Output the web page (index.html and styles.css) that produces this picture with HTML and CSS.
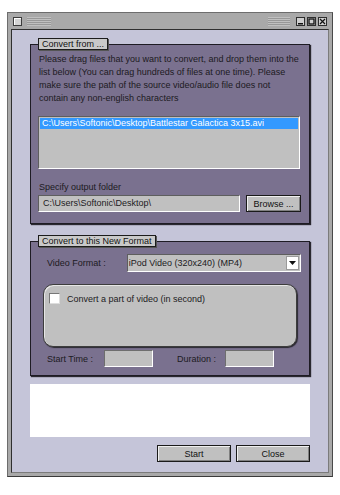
FILE: index.html
```html
<!DOCTYPE html>
<html lang="en">
<head>
    <meta charset="UTF-8">
    <title>Video Converter</title>
    <link rel="stylesheet" href="styles.css">
</head>
<body>
    <div class="window">
        <!-- Title bar -->
        <div class="titlebar">
            <span class="sysbox"></span>
            <span class="grip grip-left"></span>
            <span class="spacer"></span>
            <span class="grip grip-right"></span>
            <span class="tbtn">
                <svg width="7" height="7" viewBox="0 0 7 7"><rect x="1" y="5" width="5" height="1.5" fill="#111"/></svg>
            </span>
            <span class="tbtn">
                <svg width="7" height="7" viewBox="0 0 7 7"><rect x="1" y="1" width="5" height="5" fill="none" stroke="#111" stroke-width="1.3"/></svg>
            </span>
            <span class="tbtn">
                <svg width="7" height="7" viewBox="0 0 7 7"><path d="M1 1 L6 6 M6 1 L1 6" stroke="#111" stroke-width="1.2"/></svg>
            </span>
        </div>

        <div class="client">
            <!-- Source files -->
            <fieldset class="panel panel-from">
                <legend>Convert from ...</legend>
                <p class="intro">Please drag files that you want to convert, and drop them into the<br>list below (You can drag hundreds of files at one time). Please<br>make sure the path of the source video/audio file does not<br>contain any non-english characters</p>
                <div class="filelist">
                    <div class="file selected">C:\Users\Softonic\Desktop\Battlestar Galactica 3x15.avi</div>
                </div>
                <div class="label">Specify output folder</div>
                <div class="folder-row">
                    <div class="textbox">C:\Users\Softonic\Desktop\</div>
                    <button class="btn btn-browse">Browse ...</button>
                </div>
            </fieldset>

            <!-- Target format -->
            <fieldset class="panel panel-to">
                <legend>Convert to this New Format</legend>
                <div class="format-row">
                    <span class="format-label">Video Format :</span>
                    <div class="select">
                        <span class="select-text">iPod Video (320x240) (MP4)</span>
                        <span class="select-arrow">
                            <svg width="7" height="4" viewBox="0 0 7 4"><path d="M0 0 H7 L3.5 4 Z" fill="#111"/></svg>
                        </span>
                    </div>
                </div>
                <div class="partbox">
                    <label class="check-row"><span class="checkbox"></span>Convert a part of video (in second)</label>
                </div>
                <div class="time-row">
                    <span class="time-label">Start Time :</span>
                    <span class="timebox"></span>
                    <span class="time-label dur-label">Duration :</span>
                    <span class="timebox"></span>
                </div>
            </fieldset>

            <div class="logbox"></div>

            <div class="actions">
                <button class="btn btn-action">Start</button>
                <button class="btn btn-action">Close</button>
            </div>
        </div>
    </div>
</body>
</html>
```

FILE: styles.css
```css
/* General Styling */
body {
    margin: 0;
    padding: 12px 7px 0;
    background: #ffffff;
    font-family: 'Liberation Sans', Arial, sans-serif;
    font-size: 9px;
    color: #1c1a22;
}

/* Window frame */
.window {
    width: 326px;
    height: 465px;
    box-sizing: border-box;
    background: #a9a9a9;
    border: 1px solid #6d6d6d;
    border-bottom-color: #3a3a3a;
    border-right-color: #4a4a4a;
    padding: 0 3px 3px;
    display: flex;
    flex-direction: column;
}

.titlebar {
    height: 16px;
    display: flex;
    align-items: center;
    gap: 0;
}

.sysbox {
    width: 7px;
    height: 7px;
    margin-left: 2px;
    background: #d4d4d4;
    border: 1px solid #3c3c3c;
    box-shadow: inset 1px 1px 0 #ffffff;
}

.grip {
    height: 9px;
    background: repeating-linear-gradient(to bottom, #c4c4c4 0, #c4c4c4 1px, #959595 1px, #959595 2px);
    opacity: 0.85;
}

.grip-left {
    width: 24px;
    margin-left: 5px;
}

.spacer {
    flex: 1;
}

.grip-right {
    width: 22px;
    margin-right: 4px;
}

.tbtn {
    width: 7px;
    height: 7px;
    margin-left: 2px;
    background: #cfcfcf;
    border: 1px solid #2e2e2e;
    display: flex;
    align-items: center;
    justify-content: center;
}

.tbtn:last-child {
    margin-right: 2px;
}

/* Client area */
.client {
    flex: 1;
    background: #c5c5d9;
    border: 1px solid #2f2f2f;
    border-right-color: #7b7b7b;
    border-bottom-color: #7b7b7b;
    padding: 8px 18px 0;
    display: flex;
    flex-direction: column;
}

/* Group boxes */
.panel {
    margin: 0;
    padding: 0 8px;
    background: #7a718f;
    border: 1px solid #1e1c24;
    box-shadow: 1px 1px 1px #2a2830;
    min-width: 0;
}

.panel legend {
    padding: 0 3px;
    margin-left: -1px;
    background: #c9c9c9;
    border: 1px solid #1c1c1c;
    box-shadow: 1px 1px 0 #555;
    font-size: 9px;
    line-height: 10px;
    color: #111;
}

.intro {
    margin: 3px 0 0;
    line-height: 13px;
    white-space: nowrap;
}

.filelist {
    height: 53px;
    box-sizing: border-box;
    margin: 11px 0 0 -1px;
    width: 262px;
    background: #c0c0c0;
    border: 1px solid #5e5e5e;
    border-right-color: #ffffff;
    border-bottom-color: #ffffff;
    padding: 1px;
}

.file {
    height: 11px;
    line-height: 11px;
    padding-left: 2px;
    white-space: nowrap;
}

.file.selected {
    background: #3399ff;
    color: #ffffff;
}

.label {
    margin-top: 12px;
    line-height: 13px;
}

.folder-row {
    display: flex;
    gap: 6px;
    margin: 1px 0 11px -1px;
}

.textbox {
    width: 202px;
    height: 17px;
    box-sizing: border-box;
    background: #c0c0c0;
    border: 1px solid #5e5e5e;
    border-right-color: #ffffff;
    border-bottom-color: #ffffff;
    padding-left: 4px;
    line-height: 15px;
}

.btn {
    font-family: 'Liberation Sans', Arial, sans-serif;
    font-size: 9px;
    color: #111;
    background: #c0c0c0;
    border: 1px solid #1a1a1a;
    box-shadow: inset 1px 1px 0 #efefef, inset -1px -1px 0 #808080;
    padding: 0;
    height: 17px;
}

.btn-browse {
    width: 55px;
}

/* Target format panel */
.panel-to {
    margin-top: 11px;
    padding: 0 8px 8px;
}

.format-row {
    display: flex;
    align-items: center;
    margin-top: 7px;
}

.format-label {
    width: 80px;
    padding-left: 8px;
}

.select {
    width: 175px;
    height: 18px;
    box-sizing: border-box;
    background: #c0c0c0;
    border: 1px solid #5e5e5e;
    border-right-color: #ffffff;
    border-bottom-color: #ffffff;
    display: flex;
    align-items: center;
    justify-content: space-between;
}

.select-text {
    padding-left: 1px;
}

.select-arrow {
    width: 13px;
    height: 14px;
    margin-right: 1px;
    background: #ffffff;
    border: 1px solid #9a9a9a;
    box-sizing: border-box;
    display: flex;
    align-items: center;
    justify-content: center;
}

.partbox {
    margin: 12px 4px 0;
    height: 63px;
    box-sizing: border-box;
    background: #c0c0c0;
    border: 1px solid #3d3d3d;
    border-radius: 10px;
    box-shadow: 1px 1px 1px #2a2830, inset 1px 1px 0 #e6e6e6;
    padding: 8px 5px;
}

.check-row {
    display: flex;
    align-items: center;
    gap: 7px;
}

.checkbox {
    width: 9px;
    height: 9px;
    background: #ffffff;
    border: 1px solid #777;
    border-right-color: #ddd;
    border-bottom-color: #ddd;
}

.time-row {
    display: flex;
    align-items: center;
    margin-top: 3px;
    padding-left: 8px;
}

.time-label {
    width: 57px;
}

.dur-label {
    width: 48px;
    margin-left: 24px;
}

.timebox {
    width: 49px;
    height: 17px;
    box-sizing: border-box;
    background: #c0c0c0;
    border: 1px solid #6e6e6e;
    border-right-color: #ffffff;
    border-bottom-color: #ffffff;
}

/* Log area and buttons */
.logbox {
    margin-top: 8px;
    height: 53px;
    background: #ffffff;
}

.actions {
    display: flex;
    justify-content: flex-end;
    gap: 5px;
    margin-top: 8px;
}

.btn-action {
    width: 74px;
}
```
